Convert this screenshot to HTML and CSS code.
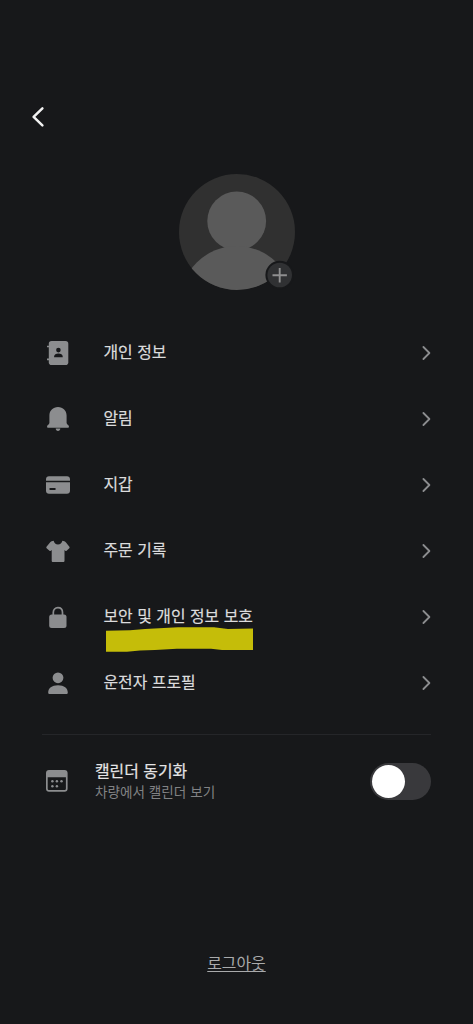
FILE: index.html
```html
<!DOCTYPE html>
<html lang="ko">
<head>
<meta charset="utf-8">
<title>프로필</title>
<link rel="stylesheet" href="styles.css">
</head>
<body>
<div class="screen">
  <header class="header">
    <svg class="back" width="24" height="24" viewBox="0 0 24 24"><path d="M16.400 3.300 7.600 11.800l8.800 8.500"/></svg>
  </header>

  <div class="avatar">
    <svg width="116" height="116" viewBox="0 0 116 116">
      <defs><clipPath id="disc"><circle cx="58" cy="58" r="58"/></clipPath></defs>
      <g clip-path="url(#disc)">
        <rect width="116" height="116" fill="#303030"/>
        <circle cx="57.700" cy="47" r="29.400" fill="#5a5a5a"/>
        <circle cx="57.700" cy="128.500" r="56.500" fill="#5a5a5a"/>
      </g>
    </svg>
    <svg class="add" width="30" height="30" viewBox="0 0 30 30">
      <circle cx="14.700" cy="15" r="14.300" fill="#17181a"/>
      <circle cx="14.700" cy="15" r="12.300" fill="#303133"/>
      <path d="M7.500 15.200h14.400M14.700 8v14.400" stroke="#8f8f90" stroke-width="1.900"/>
    </svg>
  </div>

  <nav class="menu">
    <div class="row">
      <svg class="icon" viewBox="0 0 28 28"><path d="M3 7.500h3M3 20.300h3" stroke="#8c8d8f" stroke-width="1.700"/><rect x="4.800" y="2" width="19.500" height="24" rx="2.800"/><circle class="cut" cx="14.400" cy="11.100" r="2.300"/><path class="cut" d="M10.100 18.300v-.8c0-2.100 2-3.100 4.300-3.100s4.300 1 4.300 3.100v.8z"/></svg>
      <span class="label">개인 정보</span>
      <svg class="chevron" viewBox="0 0 10 16"><path d="m2.400 2 6 6-6 6"/></svg>
    </div>
    <div class="row">
      <svg class="icon" viewBox="0 0 28 28"><path d="M14 2c-5 0-8.600 3.600-8.600 8.500v7.300c0 1.800-2.400 2.200-2.400 4 0 .6.400.9 1 .9h20c.6 0 1-.3 1-.9 0-1.800-2.400-2.200-2.400-4v-7.300C22.600 5.600 19 2 14 2z"/><path d="M11.700 23.500h4.600c0 1.500-1 2.400-2.300 2.400s-2.300-.9-2.300-2.400z"/></svg>
      <span class="label">알림</span>
      <svg class="chevron" viewBox="0 0 10 16"><path d="m2.400 2 6 6-6 6"/></svg>
    </div>
    <div class="row">
      <svg class="icon" viewBox="0 0 28 28"><path d="M2 9.700V8.300c0-1.800 1.200-3 3-3h18c1.800 0 3 1.200 3 3v1.400zM2 11.200h24v8.500c0 1.800-1.200 3-3 3H5c-1.800 0-3-1.200-3-3z"/><rect class="cut" x="5.400" y="17" width="6.300" height="2" rx=".7"/></svg>
      <span class="label">지갑</span>
      <svg class="chevron" viewBox="0 0 10 16"><path d="m2.400 2 6 6-6 6"/></svg>
    </div>
    <div class="row">
      <svg class="icon" viewBox="0 0 28 28"><path d="M9.600 3.800C10.200 6 11.700 7.600 14 7.600s3.800-1.600 4.400-3.800c1.300.1 2.700.7 3.600 1.700l3.400 4.300c.4.500.3 1-.1 1.400l-2.700 2.500c-.5.400-.9.400-1.300 0l-.8-.7v10.700c0 .8-.5 1.300-1.300 1.300H9c-.8 0-1.300-.5-1.300-1.300V13l-.9.700c-.4.400-.9.400-1.300 0l-2.900-2.500c-.4-.4-.5-.9-.1-1.400L6 5.500c.9-1 2.300-1.600 3.600-1.700z"/></svg>
      <span class="label">주문 기록</span>
      <svg class="chevron" viewBox="0 0 10 16"><path d="m2.400 2 6 6-6 6"/></svg>
    </div>
    <div class="row">
      <svg class="icon" viewBox="0 0 28 28"><path d="M9.300 13V9.600c0-3 1.900-4.900 4.600-4.900s4.600 1.900 4.600 4.900V13" fill="none" stroke="#8c8d8f" stroke-width="1.700"/><rect x="5.200" y="11.500" width="17.300" height="13.600" rx="2.500"/></svg>
      <span class="label">보안 및 개인 정보 보호</span>
      <svg class="marker" width="148" height="26" viewBox="0 0 148 26"><path d="M0 3.700 24 3.200 39 2 72 .3h36l14 1.600 25-.3v21.500H116l-11-1.400H71l-22 1.300-15 .4-13 1.300L0 24.700z"/></svg>
      <svg class="chevron" viewBox="0 0 10 16"><path d="m2.400 2 6 6-6 6"/></svg>
    </div>
    <div class="row">
      <svg class="icon" viewBox="0 0 28 28"><circle cx="14" cy="8.800" r="5.400"/><path d="M4.200 23.500c0-4.200 3.600-7.200 9.800-7.200s9.800 3 9.800 7.200c0 1-.6 1.600-1.600 1.600H5.800c-1 0-1.600-.6-1.600-1.600z"/></svg>
      <span class="label">운전자 프로필</span>
      <svg class="chevron" viewBox="0 0 10 16"><path d="m2.400 2 6 6-6 6"/></svg>
    </div>
  </nav>

  <section class="sync">
    <svg class="calendar" width="24" height="24" viewBox="0 0 24 24"><path fill-rule="evenodd" d="M4 1h15.600c1.800 0 3 1.200 3 3v15.700c0 1.800-1.200 3-3 3H4c-1.800 0-3-1.200-3-3V4c0-1.800 1.200-3 3-3zM2.700 8.300v11.200c0 1 .6 1.500 1.500 1.500h15.200c.9 0 1.500-.5 1.500-1.500V8.300z"/><circle cx="7.400" cy="12.200" r="1.250"/><circle cx="11.900" cy="12.200" r="1.250"/><circle cx="16.500" cy="12.200" r="1.250"/><circle cx="7.400" cy="17.200" r="1.250"/><circle cx="11.900" cy="17.200" r="1.250"/></svg>
    <div class="sync-text">
      <div class="sync-title">캘린더 동기화</div>
      <div class="sync-sub">차량에서 캘린더 보기</div>
    </div>
    <div class="toggle"><div class="knob"></div></div>
  </section>

  <footer class="footer"><a class="logout">로그아웃</a></footer>
</div>
</body>
</html>
```
FILE: styles.css
```css
* { box-sizing: border-box; }
body {
  margin: 0;
  background: #17181a;
  color: #dcdcdd;
  font-family: "Noto Sans CJK KR", sans-serif;
}
.screen {
  width: 473px;
  height: 1024px;
  display: flex;
  flex-direction: column;
  overflow: hidden;
}
.header { height: 174px; padding: 105px 0 0 26px; }
.back { display: block; fill: none; stroke: #f2f2f2; stroke-width: 2.5; stroke-linecap: round; stroke-linejoin: round; }
.avatar { position: relative; width: 116px; height: 116px; margin-left: 179px; }
.avatar svg { display: block; }
.avatar .add { position: absolute; left: 86px; top: 86px; }
.menu { margin-top: 30px; padding: 0 42px 0 44px; }
.row { position: relative; height: 66px; display: flex; align-items: center; }
.icon { width: 28px; height: 28px; fill: #8c8d8f; flex: none; }
.cut { fill: #17181a; }
.label {
  flex: 1;
  margin-left: 31.5px;
  padding-bottom: 2px;
  font-size: 15.9px;
  line-height: 24px;
  -webkit-text-stroke: 0.2px #dcdcdd;
}
.chevron { width: 10px; height: 16px; flex: none; fill: none; stroke: #8c8d8f; stroke-width: 1.8; stroke-linecap: round; stroke-linejoin: round; }
.marker { position: absolute; left: 62px; top: 43px; fill: #c5bd09; }
.sync {
  height: 94px;
  margin: 18px 42px 0;
  padding: 0 0 1px 3px;
  border-top: 1px solid #252629;
  display: flex;
  align-items: center;
}
.calendar { fill: #8c8d8f; flex: none; }
.sync-text { flex: 1; margin-left: 26px; padding-bottom: 3px; }
.sync-title { padding-top: 1px; font-size: 15.9px; line-height: 22px; color: #e4e4e5; -webkit-text-stroke: 0.2px #e4e4e5; }
.sync-sub { font-size: 13.6px; line-height: 19px; color: #818284; }
.toggle { width: 61px; height: 37px; padding: 2px; border-radius: 19px; background: #39393c; }
.knob { width: 33px; height: 33px; border-radius: 50%; background: #fff; }
.footer { margin-top: 122px; text-align: center; }
.logout { font-size: 15.9px; line-height: 24px; color: #a9aaab; text-decoration: underline; text-decoration-skip-ink: none; text-underline-offset: 2px; text-decoration-thickness: 1px; }
```
